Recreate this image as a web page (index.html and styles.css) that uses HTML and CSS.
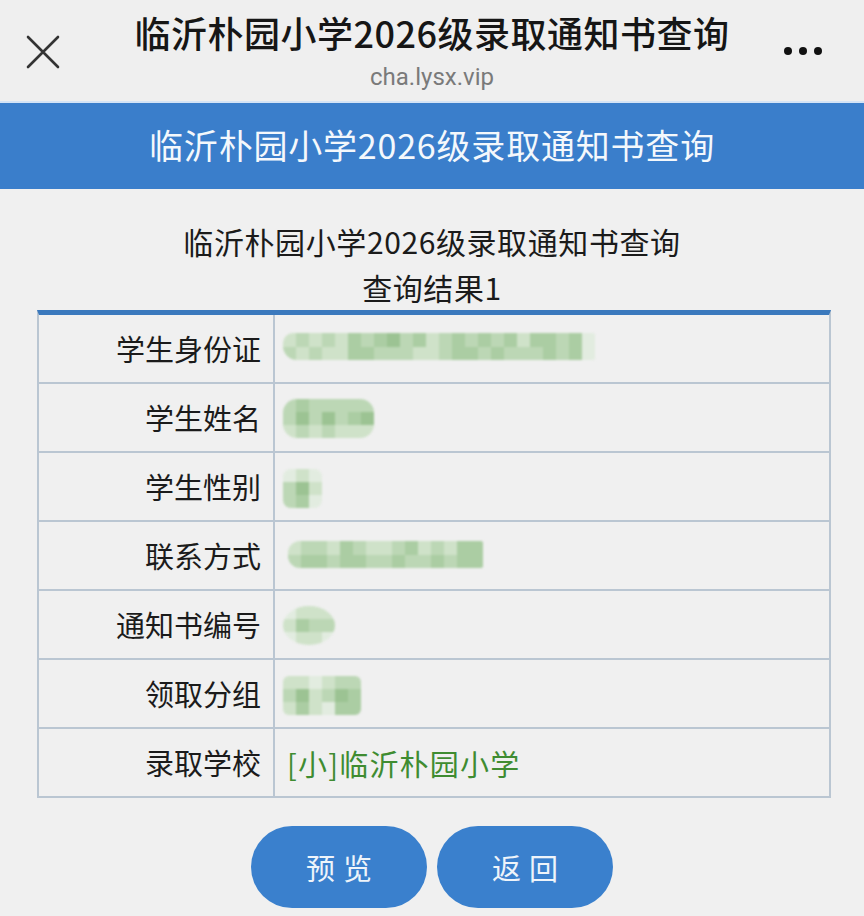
FILE: index.html
```html
<!DOCTYPE html>
<html lang="zh-CN">
<head>
<meta charset="utf-8">
<title>临沂朴园小学2026级录取通知书查询</title>
<link rel="stylesheet" href="styles.css">
</head>
<body>
<header class="topbar">
  <div class="close">
    <svg width="34" height="34" viewBox="0 0 34 34"><path d="M2 2 L32 32 M32 2 L2 32" stroke="#333" stroke-width="2.6" fill="none" stroke-linecap="round"/></svg>
  </div>
  <div class="titles">
    <div class="title">临沂朴园小学2026级录取通知书查询</div>
    <div class="url">cha.lysx.vip</div>
  </div>
  <div class="more"><span class="dot"></span><span class="dot"></span><span class="dot"></span></div>
</header>
<div class="banner">临沂朴园小学2026级录取通知书查询</div>
<main class="main">
  <div class="heading">临沂朴园小学2026级录取通知书查询</div>
  <div class="subheading">查询结果1</div>
  <div class="table">
    <div class="row">
      <div class="label">学生身份证</div>
      <div class="value">
        <div class="mosaic r2 long">
          <span class="a"></span><span class="b"></span><span class="b"></span><span class="a"></span><span class="a"></span><span class="b"></span><span class="b"></span><span class="a"></span><span class="a"></span><span class="a"></span><span class="c"></span><span class="c"></span><span class="b"></span><span class="c"></span><span class="c"></span><span class="b"></span><span class="d"></span><span class="b"></span><span class="b"></span><span class="b"></span><span class="c"></span><span class="a"></span><span class="a"></span><span class="a"></span><span class="b"></span><span class="b"></span><span class="c"></span><span class="c"></span><span class="b"></span><span class="c"></span><span class="c"></span><span class="b"></span><span class="b"></span><span class="c"></span><span class="c"></span><span class="b"></span><span class="a"></span><span class="b"></span><span class="c"></span><span class="b"></span><span class="c"></span><span class="c"></span><span class="b"></span><span class="b"></span><span class="c"></span><span class="c"></span><span class="e"></span><span class="e"></span>
        </div>
      </div>
    </div>
    <div class="row">
      <div class="label">学生姓名</div>
      <div class="value">
        <div class="mosaic r3 round">
          <span class="b"></span><span class="b"></span><span class="a"></span><span class="c"></span><span class="d"></span><span class="b"></span><span class="b"></span><span class="b"></span><span class="a"></span><span class="b"></span><span class="d"></span><span class="b"></span><span class="b"></span><span class="b"></span><span class="a"></span><span class="b"></span><span class="c"></span><span class="a"></span><span class="b"></span><span class="d"></span><span class="a"></span>
        </div>
      </div>
    </div>
    <div class="row">
      <div class="label">学生性别</div>
      <div class="value">
        <div class="mosaic r3 small">
          <span class="e"></span><span class="b"></span><span class="b"></span><span class="a"></span><span class="d"></span><span class="c"></span><span class="e"></span><span class="a"></span><span class="e"></span>
        </div>
      </div>
    </div>
    <div class="row">
      <div class="label">联系方式</div>
      <div class="value">
        <div class="mosaic r2 phone">
          <span class="a"></span><span class="b"></span><span class="b"></span><span class="c"></span><span class="b"></span><span class="c"></span><span class="a"></span><span class="b"></span><span class="c"></span><span class="c"></span><span class="b"></span><span class="c"></span><span class="a"></span><span class="b"></span><span class="a"></span><span class="b"></span><span class="b"></span><span class="c"></span><span class="c"></span><span class="b"></span><span class="a"></span><span class="b"></span><span class="b"></span><span class="c"></span><span class="a"></span><span class="b"></span><span class="c"></span><span class="c"></span><span class="c"></span><span class="c"></span>
        </div>
      </div>
    </div>
    <div class="row">
      <div class="label">通知书编号</div>
      <div class="value">
        <div class="mosaic r3 oval">
          <span class="e"></span><span class="a"></span><span class="e"></span><span class="a"></span><span class="c"></span><span class="a"></span><span class="a"></span><span class="b"></span><span class="a"></span><span class="a"></span><span class="b"></span><span class="e"></span>
        </div>
      </div>
    </div>
    <div class="row">
      <div class="label">领取分组</div>
      <div class="value">
        <div class="mosaic r3 group">
          <span class="a"></span><span class="b"></span><span class="a"></span><span class="a"></span><span class="d"></span><span class="c"></span><span class="e"></span><span class="a"></span><span class="a"></span><span class="a"></span><span class="b"></span><span class="e"></span><span class="b"></span><span class="d"></span><span class="c"></span><span class="b"></span><span class="c"></span><span class="c"></span>
        </div>
      </div>
    </div>
    <div class="row">
      <div class="label">录取学校</div>
      <div class="value school">[小]临沂朴园小学</div>
    </div>
  </div>
  <div class="actions">
    <button class="btn">预览</button>
    <button class="btn">返回</button>
  </div>
</main>
</body>
</html>
```

FILE: styles.css
```css
* { box-sizing: border-box; }
html, body { margin: 0; padding: 0; }
body {
  width: 864px;
  height: 916px;
  overflow: hidden;
  background: #f0f0f0;
  font-family: "Noto Sans CJK SC", "Noto Sans", sans-serif;
  color: #1b1b1b;
}
.topbar {
  height: 101px;
  display: grid;
  grid-template-columns: 100px 1fr 100px;
  background: #efefef;
}
.close { padding: 35px 0 0 26px; }
.close svg { display: block; }
.titles { display: flex; flex-direction: column; align-items: center; padding-top: 10px; }
.title {
  font-size: 36px;
  line-height: 44px;
  font-weight: 500;
  color: #161616;
  letter-spacing: 0.5px;
  white-space: nowrap;
}
.url {
  margin-top: 9px;
  font-family: Roboto, "Noto Sans", sans-serif;
  font-size: 24px;
  line-height: 28px;
  color: #7a7a7a;
}
.more { display: flex; gap: 7px; padding: 47px 0 0 20px; }
.dot { width: 8px; height: 8px; border-radius: 50%; background: #111; }
.banner {
  height: 88px;
  border-top: 2px solid #d4e4f6;
  background: #3a7ecb;
  color: #f4f8fc;
  font-size: 34px;
  line-height: 84px;
  text-align: center;
  letter-spacing: 0.8px;
}
.main { display: flex; flex-direction: column; align-items: center; padding-top: 29px; }
.heading, .subheading {
  font-size: 30px;
  line-height: 46px;
  color: #1b1b1b;
  letter-spacing: 0.6px;
}
.table {
  align-self: flex-start;
  margin-left: 37px;
  width: 794px;
  border: 2px solid #bac6d2;
  border-top: 5px solid #3b79bd;
}
.row {
  display: grid;
  grid-template-columns: 236px 1fr;
  height: 69px;
  border-bottom: 2px solid #bac6d2;
}
.row:last-child { border-bottom: none; height: 67px; }
.label {
  border-right: 2px solid #bac6d2;
  text-align: right;
  padding-right: 12px;
  font-size: 29px;
  line-height: 67px;
  color: #1b1b1b;
}
.value {
  display: flex;
  align-items: center;
  padding-left: 8px;
}
.school {
  padding-left: 12px;
  font-size: 29px;
  letter-spacing: 1.2px;
  color: #3f8c31;
}
.mosaic {
  display: grid;
  grid-auto-flow: column;
  grid-auto-columns: 13px;
  overflow: hidden;
  filter: blur(0.8px);
}
.mosaic span { display: block; }
.mosaic.r2 { grid-template-rows: repeat(2, 13.5px); }
.mosaic.r3 { grid-template-rows: repeat(3, 13px); }
.mosaic .a { background: #cfe2c9; }
.mosaic .b { background: #bcd7b5; }
.mosaic .c { background: #abcda3; }
.mosaic .d { background: #9cc393; }
.mosaic .e { background: #e2ece0; }
.long { border-radius: 10px 2px 2px 14px; margin-top: -4px; }
.round { border-radius: 14px; margin-top: 2px; }
.small { border-radius: 8px; margin-top: 4px; }
.phone { border-radius: 12px 2px 2px 12px; margin-left: 5px; margin-top: -2px; }
.oval { border-radius: 50%; margin-top: 2px; }
.group { border-radius: 6px; margin-top: 4px; }
.actions { display: flex; gap: 10px; margin-top: 28px; }
.btn {
  width: 176px;
  height: 82px;
  border: none;
  border-radius: 41px;
  background: #3a80cd;
  color: #eef4fa;
  font-family: "Noto Sans CJK SC", sans-serif;
  font-size: 29px;
  letter-spacing: 8px;
  padding: 0 0 0 8px;
}
```
